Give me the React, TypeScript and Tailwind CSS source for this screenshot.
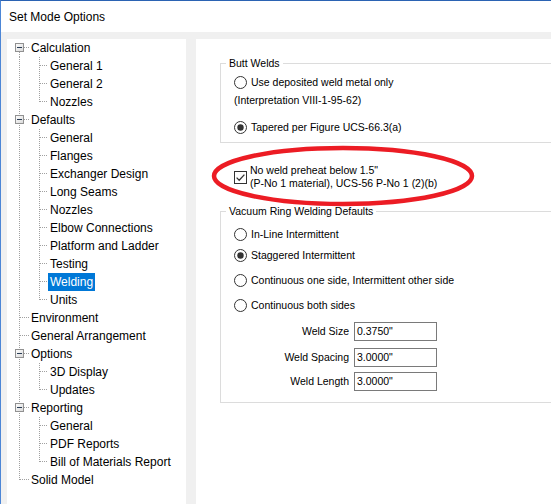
import React from 'react';

type Node = { label: string; children?: string[] };

const tree: Node[] = [
  { label: 'Calculation', children: ['General 1', 'General 2', 'Nozzles'] },
  {
    label: 'Defaults',
    children: [
      'General',
      'Flanges',
      'Exchanger Design',
      'Long Seams',
      'Nozzles',
      'Elbow Connections',
      'Platform and Ladder',
      'Testing',
      'Welding',
      'Units',
    ],
  },
  { label: 'Environment' },
  { label: 'General Arrangement' },
  { label: 'Options', children: ['3D Display', 'Updates'] },
  { label: 'Reporting', children: ['General', 'PDF Reports', 'Bill of Materials Report'] },
  { label: 'Solid Model' },
];

const dot = { stroke: '#a0a0a0', strokeWidth: 1, strokeDasharray: '1 1', shapeRendering: 'crispEdges' as const };

function RootGutter({ first, last, expandable }: { first: boolean; last: boolean; expandable: boolean }) {
  return (
    <svg width="24" height="18" className="shrink-0">
      <line x1="12.5" y1={first ? 13 : 0} x2="12.5" y2={last ? 9 : 18} {...dot} />
      <line x1={expandable ? 17 : 13} y1="8.5" x2="23" y2="8.5" {...dot} />
      {expandable && (
        <g shapeRendering="crispEdges">
          <defs>
            <linearGradient id="bx" x1="0" y1="0" x2="1" y2="1">
              <stop offset="0" stopColor="#ffffff" />
              <stop offset="1" stopColor="#d8d8d8" />
            </linearGradient>
          </defs>
          <rect x="8.5" y="4.5" width="8" height="8" fill="url(#bx)" stroke="#919191" />
          <line x1="10" y1="8.5" x2="15" y2="8.5" stroke="#2a3d56" />
        </g>
      )}
    </svg>
  );
}

function ChildGutter({ lastChild }: { lastChild: boolean }) {
  return (
    <svg width="41" height="18" className="shrink-0">
      <line x1="12.5" y1="0" x2="12.5" y2="18" {...dot} />
      <line x1="32.5" y1="0" x2="32.5" y2={lastChild ? 9 : 18} {...dot} />
      <line x1="33" y1="8.5" x2="41" y2="8.5" {...dot} />
    </svg>
  );
}

function Radio({ checked }: { checked?: boolean }) {
  return (
    <svg width="13" height="13" className="shrink-0">
      <circle cx="6.5" cy="6.5" r="6" fill="#fff" stroke="#333" />
      {checked && <circle cx="6.5" cy="6.5" r="3.2" fill="#333" />}
    </svg>
  );
}

function Check() {
  return (
    <svg width="13" height="13" className="shrink-0">
      <rect x="0.5" y="0.5" width="12" height="12" fill="#fff" stroke="#333" shapeRendering="crispEdges" />
      <polyline points="2.6,6.6 5.2,9.2 10.4,3.6" fill="none" stroke="#333" strokeWidth="1.3" />
    </svg>
  );
}

function RadioRow({ label, checked, className = '' }: { label: string; checked?: boolean; className?: string }) {
  return (
    <div className={`flex h-[18px] items-center gap-[4px] ${className}`}>
      <Radio checked={checked} />
      <span>{label}</span>
    </div>
  );
}

function Field({ label, value, className = '' }: { label: string; value: string; className?: string }) {
  return (
    <div className={`flex items-center ${className}`}>
      <span className="w-[120px] text-right pr-[5px]">{label}</span>
      <div className="flex h-[19px] w-[83px] items-center border border-[#7a7a7a] bg-white px-[2px]">{value}</div>
    </div>
  );
}

export default function App() {
  return (
    <div className="flex h-[504px] w-[551px] flex-col overflow-hidden border-t border-l border-t-[#2b63b3] border-l-[#4c86d6] bg-[#f0f0f0] font-['Liberation_Sans',Arial,sans-serif] text-black">
      <div className="flex h-[31px] shrink-0 items-center bg-white pl-[8px] text-[12px]">Set Mode Options</div>

      <div className="flex min-h-0 flex-1 pt-[7px] pl-[6px]">
        {/* tree */}
        <div className="w-[179px] shrink-0 bg-white text-[12px]">
          {tree.map((node, i) => {
            const first = i === 0;
            const last = i === tree.length - 1;
            return (
              <React.Fragment key={node.label}>
                <div className="flex h-[18px] items-center">
                  <RootGutter first={first} last={last} expandable={!!node.children} />
                  <span>{node.label}</span>
                </div>
                {node.children?.map((c, j) => {
                  const selected = node.label === 'Defaults' && c === 'Welding';
                  return (
                    <div key={c + j} className="flex h-[18px] items-center">
                      <ChildGutter lastChild={j === node.children!.length - 1} />
                      <span
                        className={`flex h-[18px] items-center px-[2px] ${selected ? 'bg-[#0078d7] text-white' : ''}`}
                      >
                        {c}
                      </span>
                    </div>
                  );
                })}
              </React.Fragment>
            );
          })}
        </div>

        <div className="w-[10px] shrink-0" />

        {/* options page */}
        <div className="relative flex-1 overflow-hidden bg-white text-[10.5px] leading-[13px]">
          <fieldset className="mt-[17px] ml-[24px] w-[360px] border border-[#dcdcdc] pb-[6px] pl-[13px]">
            <legend className="ml-[-8px] px-[3px] leading-[14px]">Butt Welds</legend>
            <RadioRow label="Use deposited weld metal only" className="mt-[3px]" />
            <div className="flex h-[18px] items-center">(Interpretation VIII-1-95-62)</div>
            <RadioRow label="Tapered per Figure UCS-66.3(a)" checked className="mt-[9px]" />
          </fieldset>

          <div className="mt-[21px] ml-[38px] flex items-center gap-[3px]">
            <Check />
            <div>
              <div>No weld preheat below 1.5"</div>
              <div>(P-No 1 material), UCS-56 P-No 1 (2)(b)</div>
            </div>
          </div>

          <fieldset className="mt-[14px] ml-[24px] w-[360px] border border-[#dcdcdc] pb-[11px] pl-[13px]">
            <legend className="ml-[-8px] px-[3px] leading-[14px]">Vacuum Ring Welding Defaults</legend>
            <RadioRow label="In-Line Intermittent" className="mt-[7px]" />
            <RadioRow label="Staggered Intermittent" checked className="mt-[3px]" />
            <RadioRow label="Continuous one side, Intermittent other side" className="mt-[7px]" />
            <RadioRow label="Continuous both sides" className="mt-[7px]" />
            <Field label="Weld Size" value={'0.3750"'} className="mt-[8px]" />
            <Field label="Weld Spacing" value={'3.0000"'} className="mt-[7px]" />
            <Field label="Weld Length" value={'3.0000"'} className="mt-[5px]" />
          </fieldset>

          {/* red annotation ring */}
          <svg className="pointer-events-none absolute left-0 top-0" width="355" height="465">
            <ellipse cx="147" cy="137" rx="129" ry="28" fill="none" stroke="#ec1c24" strokeWidth="4.5" />
          </svg>
        </div>
      </div>
    </div>
  );
}
